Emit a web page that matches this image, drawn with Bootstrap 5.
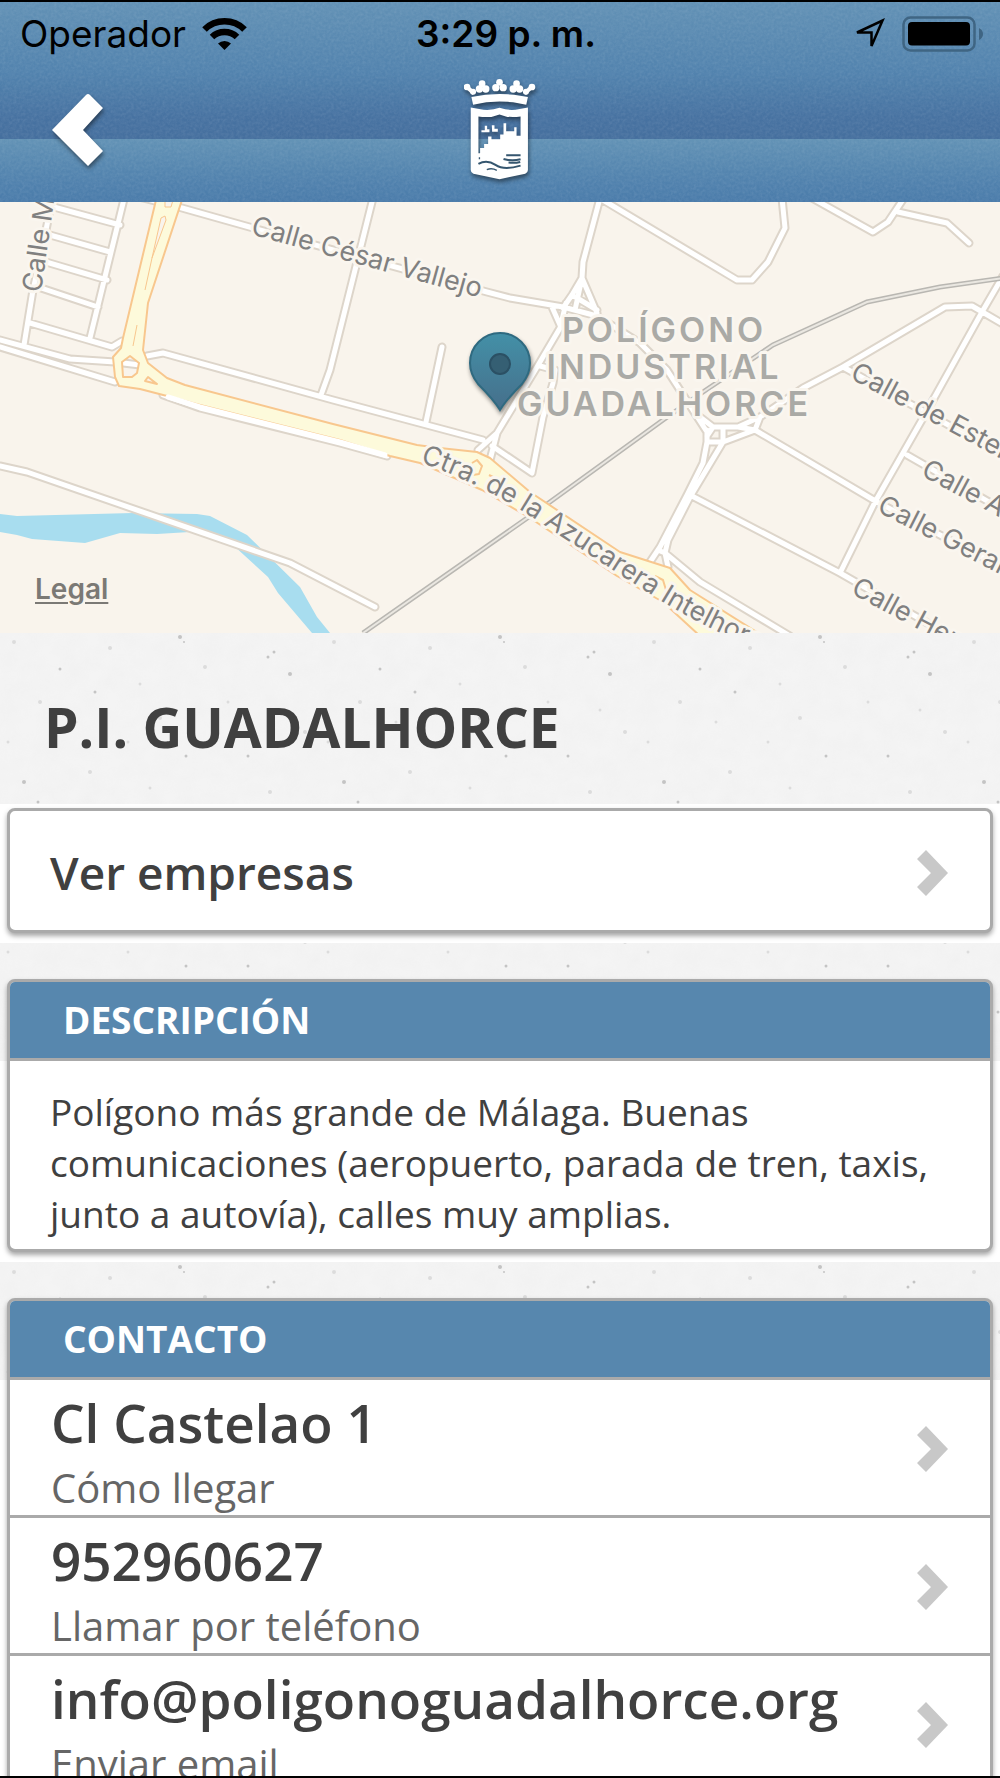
<!DOCTYPE html>
<html lang="es">
<head>
<meta charset="utf-8">
<meta name="viewport" content="width=device-width, initial-scale=1">
<title>P.I. Guadalhorce</title>
<link href="https://cdn.jsdelivr.net/npm/bootstrap@5.3.0/dist/css/bootstrap.min.css" rel="stylesheet">
<style>
  :root { --line: #aaa; --ink: #404040; --brand: #5787ae; }
  body { font-family: "Open Sans", "Noto Sans", sans-serif; color: var(--ink); border-top: 2px solid #000; border-bottom: 2px solid #000; background: #f3f3f3; }
  a { color: inherit; text-decoration: none; }

  .app-top {
    padding-bottom: 4px;
    background:
      url("data:image/svg+xml,%3Csvg xmlns='http://www.w3.org/2000/svg' width='200' height='200'%3E%3Cfilter id='n'%3E%3CfeTurbulence type='fractalNoise' baseFrequency='.35' numOctaves='2' stitchTiles='stitch'/%3E%3CfeColorMatrix values='0 0 0 0 1 0 0 0 0 1 0 0 0 0 1 .5 .5 0 0 -.38'/%3E%3C/filter%3E%3Crect width='200' height='200' filter='url(%23n)' opacity='.2'/%3E%3C/svg%3E"),
      linear-gradient(#6291b5 0, #5283ae 70px, #4772a1 115px, #456f9e 137px, #6292b5 137px, #5485af 170px, #4a7baa 100%);
  }
  .status-row { height: 60px; padding: 4px 16px 0 20px; font-family: Inter, Roboto, sans-serif; font-size: 37px; line-height: 40px; color: #000; }
  .status-side { flex: 1 1 0; }
  .status-time { font-weight: 600; padding-left: 8px; }
  .nav-row { height: 136px; padding: 0 50px; }
  .nav-side { flex: 1 1 0; }
  .back-btn { border: 0; background: none; padding: 0; line-height: 0; }
  .shadowed { filter: drop-shadow(1px 3px 2px rgba(0,0,0,.45)); }

  .app-main { scrollbar-width: none; background: #f4f4f4 url("data:image/svg+xml,%3Csvg xmlns='http://www.w3.org/2000/svg' width='320' height='210'%3E%3Cfilter id='p'%3E%3CfeTurbulence type='fractalNoise' baseFrequency='.05' numOctaves='4' stitchTiles='stitch'/%3E%3CfeColorMatrix values='0 0 0 0 .5 0 0 0 0 .5 0 0 0 0 .5 .3 0 0 0 -.08'/%3E%3C/filter%3E%3Crect width='320' height='210' filter='url(%23p)' opacity='.2'/%3E%3Cg fill='%23c4c4c4'%3E%3Ccircle cx='24' cy='160' r='2'/%3E%3Ccircle cx='60' cy='47' r='1.5'/%3E%3Ccircle cx='95' cy='70' r='1.5'/%3E%3Ccircle cx='180' cy='15' r='2'/%3E%3Ccircle cx='184' cy='20' r='1'/%3E%3Ccircle cx='268' cy='35' r='1.5'/%3E%3Ccircle cx='274' cy='30' r='1.5'/%3E%3Ccircle cx='290' cy='52' r='2'/%3E%3Ccircle cx='248' cy='134' r='1.5'/%3E%3Ccircle cx='186' cy='134' r='1.5'/%3E%3Ccircle cx='38' cy='180' r='1.5'/%3E%3Ccircle cx='120' cy='184' r='2'/%3E%3Ccircle cx='210' cy='190' r='1.5'/%3E%3Ccircle cx='300' cy='196' r='2'/%3E%3C/g%3E%3Cg fill='%23dcdcdc'%3E%3Ccircle cx='14' cy='20' r='2'/%3E%3Ccircle cx='110' cy='26' r='2'/%3E%3Ccircle cx='140' cy='62' r='1.5'/%3E%3Ccircle cx='76' cy='100' r='1.5'/%3E%3Ccircle cx='160' cy='96' r='2'/%3E%3Ccircle cx='228' cy='80' r='1.5'/%3E%3Ccircle cx='305' cy='110' r='2'/%3E%3Ccircle cx='90' cy='150' r='2'/%3E%3Ccircle cx='150' cy='166' r='1.5'/%3E%3Ccircle cx='270' cy='170' r='2'/%3E%3Ccircle cx='60' cy='200' r='2'/%3E%3Ccircle cx='40' cy='80' r='2'/%3E%3Ccircle cx='128' cy='120' r='1.5'/%3E%3Ccircle cx='205' cy='45' r='2'/%3E%3Ccircle cx='240' cy='200' r='1.5'/%3E%3Ccircle cx='170' cy='199' r='2'/%3E%3Ccircle cx='8' cy='120' r='1.5'/%3E%3Ccircle cx='280' cy='88' r='1.5'/%3E%3C/g%3E%3C/svg%3E"); }
  .map-box { height: 431px; }
  .map-box > svg { width: 100%; height: 100%; display: block; }
  .map-legal { left: 35px; bottom: 27px; font-family: Inter, Roboto, sans-serif; font-size: 28px; line-height: 34px; font-weight: 600; color: #7b7975; text-decoration: underline; text-decoration-thickness: 2px; text-underline-offset: 3px; }

  .road-edge, .road-fill { fill: none; stroke-linejoin: round; stroke-linecap: round; }
  .road-edge { stroke: #ddd5ca; stroke-width: 9; }
  .road-fill { stroke: #fff; stroke-width: 5; }
  .map-text { font-family: Inter, Roboto, sans-serif; font-size: 27px; fill: #808080; stroke: #faf6ef; stroke-width: 6; stroke-linejoin: round; paint-order: stroke; }
  .map-area { font-size: 34px; font-weight: 600; letter-spacing: 3px; fill: #aaaaa6; text-anchor: middle; }

  .place-title { margin: 0; padding: 16px 46px 0 44px; font-size: 55px; line-height: 155px; font-weight: 700; }
  .strip { padding: 0 7px 10px; margin-bottom: 36px; }
  .strip-white { background: #fff; padding-top: 4px; }
  .strip-titled { background: linear-gradient(transparent 82px, #fff 82px); }
  .box { --bs-card-border-width: 3px; --bs-card-border-color: var(--line); --bs-card-border-radius: 8px; --bs-card-inner-border-radius: 5px; --bs-card-bg: #fff; box-shadow: 0 3px 5px rgba(0,0,0,.35); }
  .box-title { margin: 0; padding: 0 53px; background: var(--brand); color: #fff; font-size: 37px; line-height: 76px; font-weight: 700; border-bottom: 3px solid var(--line); border-radius: 5px 5px 0 0; }
  .box-text { margin: 0; padding: 25px 40px 10px; font-size: 37px; line-height: 51px; }
  .see-all { padding: 4px 42px 0 40px; font-size: 46px; line-height: 115px; font-weight: 600; }
  .contact-row { padding: 6px 42px 3px 41px; border-bottom: 3px solid var(--line); }
  .contact-row:last-child { border-bottom: 0; }
  .contact-main { font-size: 53px; line-height: 74px; font-weight: 600; }
  .contact-sub { margin-top: 4px; font-size: 40px; line-height: 48px; font-weight: 400; color: #666; }
  .chev { width: 31px; height: 46px; fill: #c8c8c8; }
</style>
<script src="https://cdn.jsdelivr.net/npm/bootstrap@5.3.0/dist/js/bootstrap.bundle.min.js"></script>
</head>
<body class="d-flex flex-column vh-100 overflow-hidden">

<header class="app-top flex-shrink-0">
  <div class="status-row d-flex align-items-center">
    <div class="status-side d-flex align-items-center gap-3">
      <span>Operador</span>
      <svg width="45" height="33" viewBox="0 0 45 33" aria-label="Wi-Fi"><g fill="none" stroke="#000" stroke-width="6.500"><path d="M2.500 11.500a28.500 28.500 0 0 1 40 0"/><path d="M10 19a18 18 0 0 1 25 0"/></g><path d="M22.500 32l-6.500-6.500a9.500 9.500 0 0 1 13 0z"/></svg>
    </div>
    <div class="status-time">3:29 p. m.</div>
    <div class="status-side d-flex align-items-center justify-content-end">
      <svg class="me-3" width="32" height="32" viewBox="0 0 32 32" aria-label="Ubicación"><path d="M3 14.500L28.500 2.500 17.500 28V14.500z" fill="none" stroke="#000" stroke-width="2.500"/></svg>
      <svg width="82" height="36" viewBox="0 0 82 36" aria-label="Batería"><rect x="1.500" y="1.500" width="71" height="33" rx="7" fill="none" stroke="#3f6583" stroke-width="2.500"/><rect x="6" y="6" width="62" height="23.500" rx="4"/><path d="M77 12q4 2 4 6t-4 6z" fill="#3f6583"/></svg>
    </div>
  </div>
  <div class="nav-row d-flex align-items-center">
    <div class="nav-side"><button class="back-btn" type="button" aria-label="Volver"><svg class="shadowed" width="54" height="74" viewBox="0 0 54 74"><path fill="#fff" d="M2 37L36 2Q38 0 40 2L53 15 33 37 53 58 38 73z"/></svg></button></div>
    <svg class="shadowed" width="72" height="102" viewBox="72 28 215 305" aria-label="Escudo de Málaga">
      <g fill="#fff">
        <circle cx="81" cy="52" r="10"/><circle cx="99" cy="66" r="9"/><path d="M80 44l26 22-8 10-22-20z"/>
        <circle cx="126" cy="42" r="10"/><circle cx="118" cy="58" r="11"/><circle cx="137" cy="58" r="11"/>
        <circle cx="178" cy="38" r="10"/><circle cx="167" cy="54" r="11"/><circle cx="189" cy="54" r="11"/>
        <circle cx="229" cy="42" r="10"/><circle cx="219" cy="58" r="11"/><circle cx="238" cy="58" r="11"/>
        <circle cx="275" cy="52" r="10"/><circle cx="257" cy="66" r="9"/><path d="M275 44l-26 22 8 10 22-20z"/>
        <path d="M94 82Q178 64 263 82L258 105Q178 86 99 105z"/>
        <path fill-rule="evenodd" d="M92 113L130 120Q158 122 178 114 198 122 226 120L263 113V300Q263 308 255 311L205 322 178 328 150 322 100 311Q92 308 92 300zM115 140V250H120V234H132V222H144V200H154V208H180V194H190V160H198V184H222V172H229V198H241V140Q205 146 178 134 150 146 115 140z"/>
        <path d="M134 168h7v10h7v9h-24v-6h10zM155 166h8v11h10v9h-17z"/>
      </g>
      <g fill="none" stroke="#35566f" stroke-width="6"><path d="M115 282Q140 268 166 285T241 287"/><path d="M198 256h43M190 267q25 8 51 1M205 278q20 2 35-2"/><path d="M140 299q15-6 30 2M118 262v6" stroke-width="4"/></g>
    </svg>
    <div class="nav-side"></div>
  </div>
</header>

<main class="app-main flex-grow-1 overflow-auto">
  <section class="map-box position-relative" aria-label="Mapa">
    <svg viewBox="0 202 1000 431" preserveAspectRatio="xMidYMid slice">
      <defs>
        <path id="streets" d="M125 195L90 338M50 210L42 250 33 290 24 345M50 206L120 225M50 235L110 252M46 262L107 280M38 287L98 307M30 323L112 347 122 341M0 340L70 359 115 362 140 365M0 347L115 382M147 356L163 353 333 400 483 440M163 395L200 408 340 443 387 456M143 198L182 208 253 228 487 292 510 298 563 307 597 316 640 343 667 370 707 432M373 198L330 370 321 395M442 347L426 422M600 198L583 262 582 278 572 295 563 308M582 278L597 313M582 278L575 310M572 295L597 310M552 307L560 325M566 303L560 328 537 367 497 433 478 450M497 433L490 460M492 446L532 473 543 417 553 383 555 370 540 366M603 200L737 280H752L768 262 785 228 782 198M812 198L873 232 888 222 904 198M898 212L947 223 969 243M1003 276L982 312 923 418 875 502 840 573M760 417L803 388 843 367 945 307 972 306 1003 324M843 367L1003 455M907 455L1003 510M707 442L723 442 755 430 877 502 1003 568M700 417L713 427H738L760 417 755 430 738 427M707 430V442L703 463 687 495 660 547 650 562M713 427L707 436M723 427V442L690 497 668 540 665 553 668 567M690 495L840 573 950 636M658 550L665 553 700 582 790 636M0 466L27 472 290 563 375 607"/>
        <path id="ctra" d="M420 462Q482 484 538 521T658 599Q700 625 760 651"/>
        <linearGradient id="pin" x2="0" y2="1"><stop stop-color="#4390a7"/><stop offset="1" stop-color="#466f8b"/></linearGradient>
      </defs>
      <rect y="202" width="1000" height="431" fill="#f9f4ec"/>
      <path fill="#a8ddef" d="M0 514L17 516 133 513 197 514 210 516 247 535 300 587 317 617 330 633H312L278 593 268 577 233 545 190 532 157 534 120 533 85 543 32 539 17 535 0 532z"/>
      <use href="#streets" class="road-edge"/>
      <use href="#streets" class="road-fill"/>
      <path d="M363 633L543 507 663 420 703 392 773 345 867 302 940 287 1003 278" fill="none" stroke="#b9b7b2" stroke-width="5"/>
      <path d="M363 633L543 507 663 420 703 392 773 345 867 302 940 287 1003 278" fill="none" stroke="#eae7e1" stroke-width="2"/>
      <g stroke="#f8c78e" stroke-width="2" stroke-linejoin="round">
        <path fill="#fdfadb" fill-rule="evenodd" d="M156 200L123 338 121 348 113 357 115 377 119 386 140 389 167 396 200 405 340 440 390 456 420 463 482 490 530 518 617 576 663 602 700 636H763L690 590 670 568 620 552 530 492 490 458 477 452 440 448 417 445 333 424 185 385 167 378 148 363 143 350 148 303 182 200zM122 362L130 356 139 363 137 373 132 377 123 377zM145 381L148 377 157 384z"/>
        <path fill="#f9f4ec" stroke-width="1" d="M165 216L161 218 152 258 166 220zM165 200V207H171L173 200z"/>
        <path fill="none" stroke-width="1" d="M152 258L145 290M137 325L133 346"/>
        <path fill="none" d="M472 463l5-3 5 6-3 8-6 1M489 475l8 4M655 576l8 4 3 10"/>
      </g>
      <path class="road-fill" d="M168 397L200 407 340 442 385 455"/>
      <g class="map-text">
        <text transform="translate(41 293) rotate(-82)">Calle M</text>
        <text transform="translate(250 234) rotate(15.500)">Calle César Vallejo</text>
        <text transform="translate(849 378) rotate(28)">Calle de Esteban</text>
        <text transform="translate(920 475) rotate(28)">Calle Alfredo</text>
        <text transform="translate(876 511) rotate(27)">Calle Gerardo</text>
        <text transform="translate(850 593) rotate(28)">Calle Hermanos</text>
        <text><textPath href="#ctra">Ctra. de la Azucarera Intelhorce</textPath></text>
      </g>
      <g class="map-text map-area">
        <text x="664" y="342">POLÍGONO</text>
        <text x="664" y="379">INDUSTRIAL</text>
        <text x="664" y="416">GUADALHORCE</text>
      </g>
      <g class="shadowed"><path d="M500 410Q494 400 478 384 470 374 470 363A30 30 0 0 1 530 363Q530 374 522 384 506 400 500 410z" fill="url(#pin)" stroke="#2f6a80" stroke-width="2"/></g>
      <circle cx="500" cy="364" r="10" fill="#355f73" stroke="#2b5064" stroke-width="2"/>
    </svg>
    <a class="map-legal position-absolute" href="#legal">Legal</a>
  </section>

  <h1 class="place-title">P.I. GUADALHORCE</h1>

  <section class="strip strip-white">
    <div class="card box">
      <a class="see-all d-flex align-items-center justify-content-between" href="#empresas">Ver empresas
        <svg class="chev" viewBox="0 0 31 46"><path d="M9 0L31 23 9 46 0 37 14 23 0 9z"/></svg></a>
    </div>
  </section>

  <section class="strip strip-titled">
    <div class="card box">
      <h2 class="box-title">DESCRIPCIÓN</h2>
      <p class="box-text">Polígono más grande de Málaga. Buenas comunicaciones (aeropuerto, parada de tren, taxis, junto a autovía), calles muy amplias.</p>
    </div>
  </section>

  <section class="strip strip-titled mb-0">
    <div class="card box">
      <h2 class="box-title">CONTACTO</h2>
      <a class="contact-row d-flex align-items-center justify-content-between" href="#mapa">
        <div><div class="contact-main">Cl Castelao 1</div><div class="contact-sub">Cómo llegar</div></div>
        <svg class="chev" viewBox="0 0 31 46"><path d="M9 0L31 23 9 46 0 37 14 23 0 9z"/></svg></a>
      <a class="contact-row d-flex align-items-center justify-content-between" href="tel:952960627">
        <div><div class="contact-main">952960627</div><div class="contact-sub">Llamar por teléfono</div></div>
        <svg class="chev" viewBox="0 0 31 46"><path d="M9 0L31 23 9 46 0 37 14 23 0 9z"/></svg></a>
      <a class="contact-row d-flex align-items-center justify-content-between" href="mailto:info@poligonoguadalhorce.org">
        <div><div class="contact-main">info@poligonoguadalhorce.org</div><div class="contact-sub">Enviar email</div></div>
        <svg class="chev" viewBox="0 0 31 46"><path d="M9 0L31 23 9 46 0 37 14 23 0 9z"/></svg></a>
    </div>
  </section>
</main>
</body>
</html>
